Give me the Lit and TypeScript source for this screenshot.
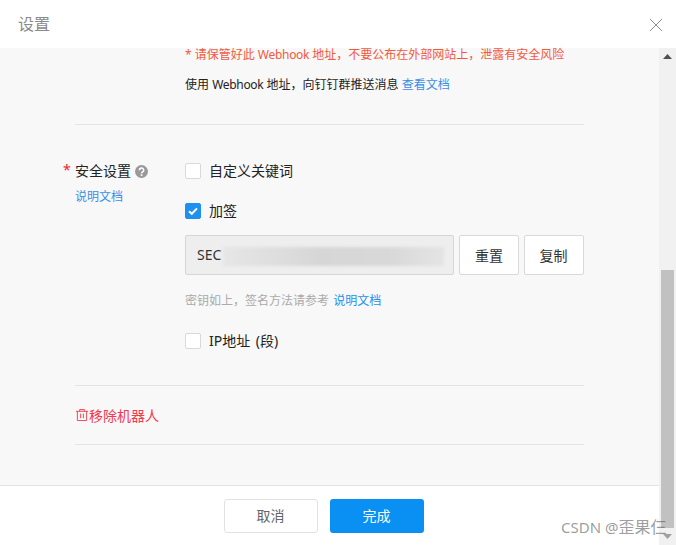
import { LitElement, html, css } from "lit";
import { customElement } from "lit/decorators.js";

@customElement("app-root")
export class AppRoot extends LitElement {
  static styles = css`
    :host { display: block; width: 676px; height: 545px; position: relative; overflow: hidden; background: #fff;
      font-family: "Noto Sans", "Noto Sans CJK SC", sans-serif; font-size: 14px; color: #222; }
    * { box-sizing: border-box; }
    a { color: #3a8ee6; text-decoration: none; }
    .header { height: 48px; display: flex; align-items: center; justify-content: space-between; padding: 0 13px 0 18px; background: #fff; }
    .title { font-size: 16px; color: #8a8a8a; line-height: 48px; }
    .close { width: 14px; height: 14px; display: block; margin-top: 2px; }
    .frame { display: grid; grid-template-columns: 1fr 17px; height: 497px; }
    .main { display: flex; flex-direction: column; min-width: 0; }
    .body { height: 437px; background: #f8f8f8; padding: 0 75px; }
    .warn { color: #f4593c; font-size: 12px; line-height: 14px; padding: 0 0 0 110px; white-space: nowrap; }
    .use { font-size: 12px; line-height: 18px; padding: 14px 0 0 110px; white-space: nowrap; color: #222; }
    .lat { letter-spacing: -0.3px; }
    .rule { height: 1px; background: #e4e4e4; }
    .rule.first { margin-top: 30px; }
    .settings { display: grid; grid-template-columns: 110px 1fr; padding-top: 36px; height: 260px; }
    .label { position: relative; line-height: 18px; white-space: nowrap; display: flex; align-items: center; gap: 4px; height: 20px; }
    .star { position: absolute; left: -12px; top: -1px; color: #f5222d; font-size: 14px; line-height: 20px; }
    .help { width: 13px; height: 13px; display: block; }
    .labeldoc { font-size: 12px; line-height: 16px; margin-top: 8px; display: block; }
    .check { display: flex; align-items: center; gap: 8px; height: 20px; line-height: 20px; }
    .box { width: 16px; height: 16px; border: 1px solid #d9d9d9; border-radius: 2px; background: #fff; display: flex; align-items: center; justify-content: center; flex: none; }
    .box.on { background: #1f8ff0; border-color: #1f8ff0; }
    .box svg { width: 12px; height: 12px; display: block; }
    .second { margin-top: 20px; }
    .keyrow { display: flex; gap: 5px; margin-top: 14px; }
    .key { position: relative; width: 269px; height: 40px; background: #eeeeee; border: 1px solid #d6d6d6; border-radius: 2px; padding-left: 11px; line-height: 38px; overflow: hidden; color: #333; }
    .blur { position: absolute; left: 37px; top: 11px; width: 221px; height: 19px; background: linear-gradient(90deg, #e6e6e6, #d6d6d6 45%, #d8d8d8 75%, #e4e4e4); filter: blur(1.5px); }
    .btn { width: 60px; height: 40px; background: #fff; border: 1px solid #d9d9d9; border-radius: 2px; display: flex; align-items: center; justify-content: center; color: #333; }
    .btn.copy { padding-right: 1px; }
    .hint { font-size: 12px; line-height: 16px; color: #aaa; margin-top: 18px; white-space: nowrap; word-spacing: 1px; }
    .hint a { color: #1f8ff0; }
    .third { margin-top: 22px; word-spacing: 2px; }
    .remove { display: flex; align-items: center; gap: 1px; height: 58px; color: #f5394d; padding-left: 1px; }
    .remove svg { width: 12px; height: 12px; display: block; }
    .footer { height: 60px; border-top: 1px solid #e4e4e4; background: #fff; display: flex; padding: 13px 0 0 224px; gap: 12px; }
    .fbtn { width: 94px; height: 34px; border-radius: 3px; display: flex; align-items: center; justify-content: center; padding: 0 1px 2px 0; }
    .cancel { border: 1px solid #e2e2e2; background: #fff; color: #666; }
    .done { background: #0a90f2; color: #fff; }
    .bar { background: #f1f1f1; display: flex; flex-direction: column; align-items: center; padding: 0 2px; }
    .arrow { height: 17px; flex: none; display: flex; align-items: center; justify-content: center; }
    .arrow svg { width: 9px; height: 5px; display: block; }
    .spacer { height: 205px; flex: none; }
    .thumb { width: 13px; height: 258px; flex: none; background: #c1c1c1; }
    .mark { position: absolute; left: 561px; top: 517px; font-size: 15px; line-height: 20px; color: rgba(90,90,90,.6); white-space: nowrap; pointer-events: none; }
    .mark b { font-weight: 400; font-size: 16px; }
  `;

  render() {
    return html`
      <div class="header">
        <div class="title">设置</div>
        <svg class="close" viewBox="0 0 14 14" fill="none" stroke="#8f8f8f" stroke-width="1"><path d="M1 1l12 12M13 1L1 13"/></svg>
      </div>
      <div class="frame">
        <div class="main">
          <div class="body">
            <div class="warn">* 请保管好此 <span class="lat">Webhook</span> 地址，不要公布在外部网站上，泄露有安全风险</div>
            <div class="use">使用 <span class="lat">Webhook</span> 地址，向钉钉群推送消息 <a>查看文档</a></div>
            <div class="rule first"></div>
            <div class="settings">
              <div>
                <div class="label">
                  <span class="star">*</span><span>安全设置</span>
                  <svg class="help" viewBox="0 0 13 13"><circle cx="6.500" cy="6.500" r="6.500" fill="#999"/><path d="M4.300 5.200a2.200 2.100 0 1 1 3.300 1.800c-.8.400-1.100.7-1.100 1.300" fill="none" stroke="#fff" stroke-width="1.600"/><rect x="5.700" y="9.200" width="1.700" height="1.700" fill="#fff"/></svg>
                </div>
                <a class="labeldoc">说明文档</a>
              </div>
              <div>
                <div class="check"><span class="box"></span><span>自定义关键词</span></div>
                <div class="check second">
                  <span class="box on"><svg viewBox="0 0 12 12" fill="none" stroke="#fff" stroke-width="2"><path d="M2 6.200l2.800 2.600L10 3.400"/></svg></span><span>加签</span>
                </div>
                <div class="keyrow">
                  <div class="key">SEC<div class="blur"></div></div>
                  <div class="btn">重置</div>
                  <div class="btn copy">复制</div>
                </div>
                <div class="hint">密钥如上，签名方法请参考 <a>说明文档</a></div>
                <div class="check third"><span class="box"></span><span>IP地址 (段)</span></div>
              </div>
            </div>
            <div class="rule"></div>
            <div class="remove">
              <svg viewBox="0 0 13 13" fill="none" stroke="#f5394d" stroke-width="1"><path d="M0 2.500h13M4 2.500V.5h5v2M1.500 2.500v10h10v-10M5 5v5M8 5v5"/></svg>
              <span>移除机器人</span>
            </div>
            <div class="rule"></div>
          </div>
          <div class="footer">
            <div class="fbtn cancel">取消</div>
            <div class="fbtn done">完成</div>
          </div>
        </div>
        <div class="bar">
          <div class="arrow"><svg viewBox="0 0 9 5"><path d="M4.500 0L9 5H0z" fill="#505050"/></svg></div>
          <div class="spacer"></div>
          <div class="thumb"></div>
          <div class="arrow"><svg viewBox="0 0 9 5"><path d="M0 0h9L4.500 5z" fill="#a0a0a0"/></svg></div>
        </div>
      </div>
      <div class="mark">CSDN @<b>歪果仨</b></div>
    `;
  }
}
